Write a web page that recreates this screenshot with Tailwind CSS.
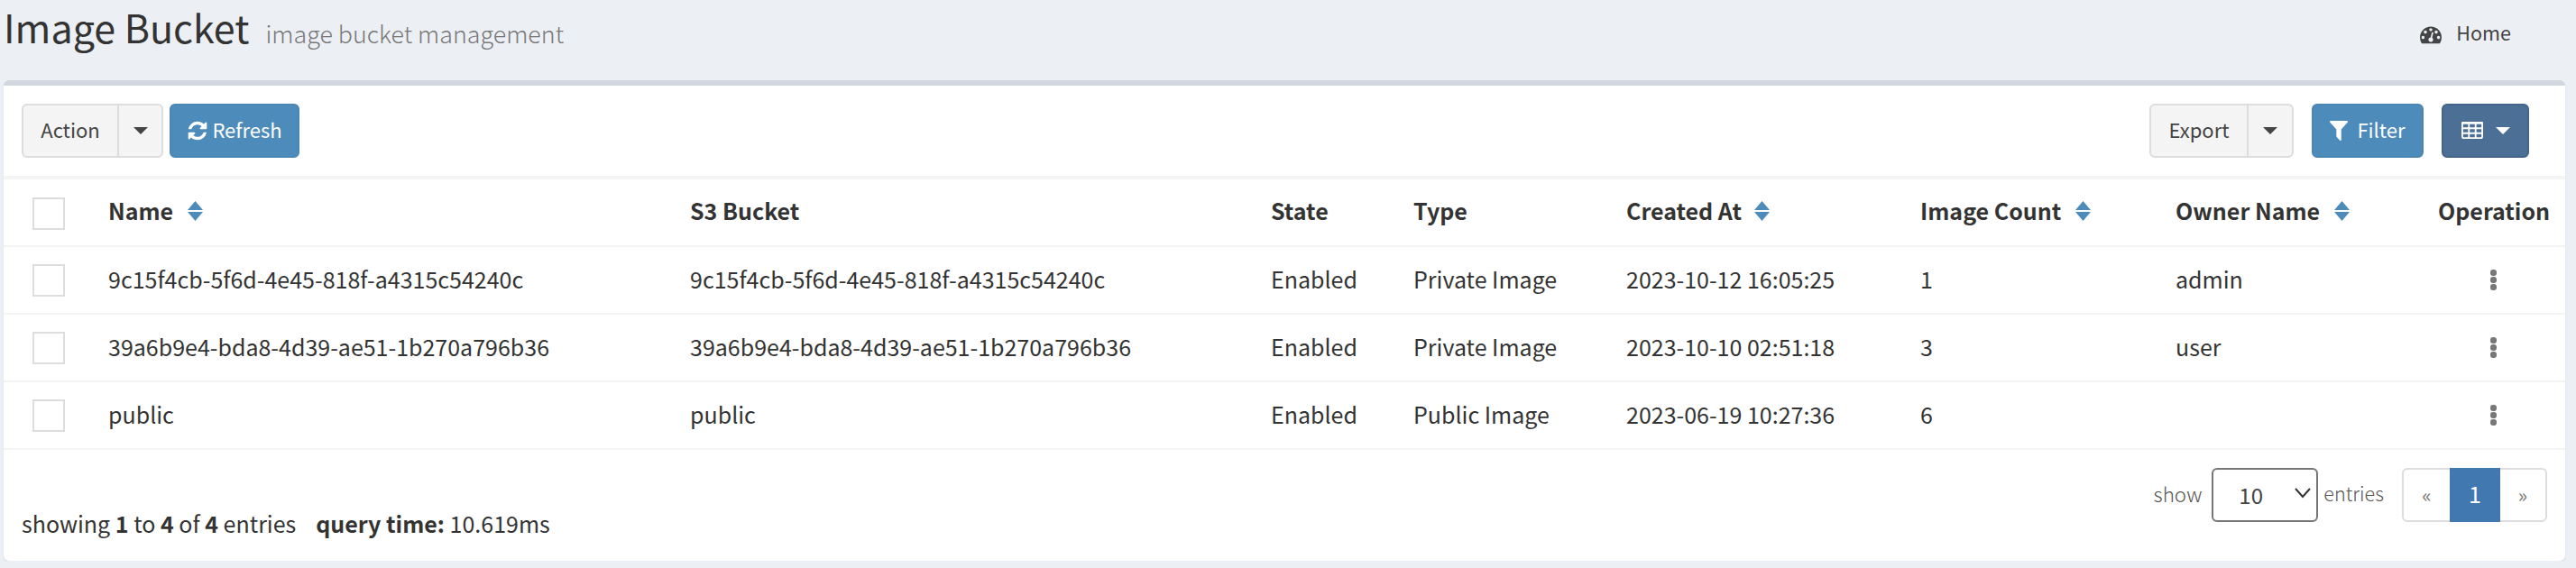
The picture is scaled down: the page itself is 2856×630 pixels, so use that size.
<!DOCTYPE html>
<html lang="en">
<head>
  <meta charset="UTF-8" />
  <meta name="viewport" content="width=device-width, initial-scale=1.0" />
  <title>Image Bucket</title>
  <script src="https://cdn.jsdelivr.net/npm/@tailwindcss/browser@4"></script>
</head>
<body class="bg-[#ecf0f5] font-['Noto_Sans_CJK_SC','Noto_Sans',sans-serif] text-[25px] text-[#333] overflow-hidden">
  <!-- page header -->
  <div class="h-[89px] flex justify-between pl-[4px] pr-[72px]">
    <div class="flex items-baseline h-[58px]">
      <h1 class="text-[43px] leading-[58px] font-normal">Image Bucket</h1>
      <span class="ml-[18px] text-[26.8px] font-light text-[#777]">image bucket management</span>
    </div>
    <div class="flex items-center gap-[16px] h-[75px] text-[21.6px] text-[#444]">
      <svg class="w-[24px] h-[24px]" viewBox="0 0 1792 1792" fill="#444"><path d="M384 1152q0-53-37.5-90.5t-90.5-37.5-90.5 37.5-37.5 90.5 37.5 90.5 90.5 37.5 90.5-37.5 37.5-90.5zm192-448q0-53-37.5-90.5t-90.5-37.5-90.5 37.5-37.5 90.5 37.5 90.5 90.5 37.5 90.5-37.5 37.5-90.5zm428 481l101-382q6-26-7.5-48.5t-38.5-29.5-48 6.5-30 39.5l-101 382q-60 5-107 43.5t-63 98.5q-20 77 20 146t117 89 146-20 89-117q16-60-6-117t-72-91zm660-33q0-53-37.5-90.5t-90.5-37.5-90.5 37.5-37.5 90.5 37.5 90.5 90.5 37.5 90.5-37.5 37.5-90.5zm-640-640q0-53-37.5-90.5t-90.5-37.5-90.5 37.5-37.5 90.5 37.5 90.5 90.5 37.5 90.5-37.5 37.5-90.5zm448 192q0-53-37.5-90.5t-90.5-37.5-90.5 37.5-37.5 90.5 37.5 90.5 90.5 37.5 90.5-37.5 37.5-90.5zm320 448q0 261-141 483-19 29-54 29h-1402q-35 0-54-29-141-221-141-483 0-182 71-348t191-286 286-191 348-71 348 71 286 191 191 286 71 348z"/></svg>
      <span class="pb-[2px]">Home</span>
    </div>
  </div>

  <!-- box -->
  <div class="mx-[4px] w-[2840px] h-[533px] bg-white border-t-[6px] border-[#d2d6de] rounded-[6px] shadow-[0_2px_2px_rgba(0,0,0,0.1)]">
    <!-- toolbar -->
    <div class="h-[104px] border-b-[4px] border-[#f4f4f4] flex justify-between pt-[20px] pl-[20px] pr-[40px] text-[22px]">
      <div class="flex gap-[7px] h-[60px]">
        <div class="flex w-[157px] border-[2px] border-[#ddd] bg-[#f4f4f4] rounded-[6px] text-[#444]">
          <button class="w-[106px] pb-[3px] border-r-[2px] border-[#ddd]">Action</button>
          <button class="flex-1 flex items-center justify-center">
            <svg class="w-[16px] h-[8px]" viewBox="0 0 16 8" fill="#444"><polygon points="0,0 16,0 8,8"/></svg>
          </button>
        </div>
        <button class="w-[144px] flex items-center justify-center gap-[4px] bg-[#4c8bba] border-[2px] border-[#4a86b4] rounded-[6px] text-white">
          <svg class="w-[24px] h-[24px]" viewBox="0 0 1792 1792" fill="#fff"><path d="M1639 1056q0 5-1 7-64 268-268 434.5t-478 166.5q-146 0-282.5-55t-243.5-157l-129 129q-19 19-45 19t-45-19-19-45v-448q0-26 19-45t45-19h448q26 0 45 19t19 45-19 45l-137 137q71 66 161 102t187 36q134 0 250-65t186-179q11-17 53-117 8-23 30-23h192q13 0 22.5 9.5t9.5 22.5zm25-800v448q0 26-19 45t-45 19h-448q-26 0-45-19t-19-45 19-45l138-138q-148-137-349-137-134 0-250 65t-186 179q-11 17-53 117-8 23-30 23h-199q-13 0-22.5-9.5t-9.5-22.5v-7q65-268 270-434.5t480-166.5q146 0 284 55.5t245 156.5l130-129q19-19 45-19t45 19 19 45z"/></svg>
          <span class="pb-[3px]">Refresh</span>
        </button>
      </div>
      <div class="flex h-[60px]">
        <div class="flex w-[160px] border-[2px] border-[#ddd] bg-[#f4f4f4] rounded-[6px] text-[#444]">
          <button class="w-[108px] pb-[3px] border-r-[2px] border-[#ddd]">Export</button>
          <button class="flex-1 flex items-center justify-center">
            <svg class="w-[16px] h-[8px]" viewBox="0 0 16 8" fill="#444"><polygon points="0,0 16,0 8,8"/></svg>
          </button>
        </div>
        <button class="ml-[20px] w-[124px] flex items-center justify-center gap-[10px] bg-[#4c8bba] border-[2px] border-[#4a86b4] rounded-[6px] text-white">
          <svg class="w-[20px] h-[22px]" viewBox="190 256 1410 1408" preserveAspectRatio="none" fill="#fff"><path d="M1595 295q17 41-14 70l-493 493v742q0 42-39 59-13 5-25 5-27 0-45-19l-256-256q-19-19-19-45v-486l-493-493q-31-29-14-70 17-39 59-39h1280q42 0 59 39z"/></svg>
          <span class="pb-[3px]">Filter</span>
        </button>
        <button class="ml-[20px] w-[97px] flex items-center justify-center gap-[14px] bg-[#4b6f95] border-[2px] border-[#44658a] rounded-[6px]">
          <svg class="w-[24px] h-[20px]" viewBox="64 192 1664 1408" preserveAspectRatio="none" fill="#fff"><path d="M576 1376v-192q0-14-9-23t-23-9h-320q-14 0-23 9t-9 23v192q0 14 9 23t23 9h320q14 0 23-9t9-23zm0-384v-192q0-14-9-23t-23-9h-320q-14 0-23 9t-9 23v192q0 14 9 23t23 9h320q14 0 23-9t9-23zm512 384v-192q0-14-9-23t-23-9h-320q-14 0-23 9t-9 23v192q0 14 9 23t23 9h320q14 0 23-9t9-23zm-512-768v-192q0-14-9-23t-23-9h-320q-14 0-23 9t-9 23v192q0 14 9 23t23 9h320q14 0 23-9t9-23zm512 384v-192q0-14-9-23t-23-9h-320q-14 0-23 9t-9 23v192q0 14 9 23t23 9h320q14 0 23-9t9-23zm512 384v-192q0-14-9-23t-23-9h-320q-14 0-23 9t-9 23v192q0 14 9 23t23 9h320q14 0 23-9t9-23zm-512-768v-192q0-14-9-23t-23-9h-320q-14 0-23 9t-9 23v192q0 14 9 23t23 9h320q14 0 23-9t9-23zm512 384v-192q0-14-9-23t-23-9h-320q-14 0-23 9t-9 23v192q0 14 9 23t23 9h320q14 0 23-9t9-23zm0-384v-192q0-14-9-23t-23-9h-320q-14 0-23 9t-9 23v192q0 14 9 23t23 9h320q14 0 23-9t9-23zm128-320v1088q0 66-47 113t-113 47h-1344q-66 0-113-47t-47-113v-1088q0-66 47-113t113-47h1344q66 0 113 47t47 113z"/></svg>
          <svg class="w-[16px] h-[8px]" viewBox="0 0 16 8" fill="#fff"><polygon points="0,0 16,0 8,8"/></svg>
        </button>
      </div>
    </div>

    <!-- table -->
    <table class="w-full table-fixed border-collapse text-left">
      <colgroup>
        <col class="w-[100px]" /><col class="w-[645px]" /><col class="w-[644px]" /><col class="w-[158px]" /><col class="w-[236px]" /><col class="w-[326px]" /><col class="w-[283px]" /><col class="w-[291px]" /><col class="w-[157px]" />
      </colgroup>
      <thead>
        <tr class="h-[74px] border-b-[2px] border-[#f4f4f4]">
          <th class="pl-[32px] pt-[3px] font-normal"><div class="w-[36px] h-[36px] border-[2px] border-[#ddd]"></div></th>
          <th class="px-[16px] pb-[3px] font-bold">
            <div class="flex items-center gap-[16px]">Name
              <svg class="w-[17px] h-[22px]" viewBox="0 0 17 22" fill="#4c8bba"><polygon points="8.5,0 17,10 0,10"/><polygon points="0,12 17,12 8.5,22"/></svg>
            </div>
          </th>
          <th class="px-[16px] pb-[3px] font-bold">S3 Bucket</th>
          <th class="px-[16px] pb-[3px] font-bold">State</th>
          <th class="px-[16px] pb-[3px] font-bold">Type</th>
          <th class="px-[16px] pb-[3px] font-bold">
            <div class="flex items-center gap-[14px]">Created At
              <svg class="w-[17px] h-[22px]" viewBox="0 0 17 22" fill="#4c8bba"><polygon points="8.5,0 17,10 0,10"/><polygon points="0,12 17,12 8.5,22"/></svg>
            </div>
          </th>
          <th class="px-[16px] pb-[3px] font-bold">
            <div class="flex items-center gap-[16px]">Image Count
              <svg class="w-[17px] h-[22px]" viewBox="0 0 17 22" fill="#4c8bba"><polygon points="8.5,0 17,10 0,10"/><polygon points="0,12 17,12 8.5,22"/></svg>
            </div>
          </th>
          <th class="px-[16px] pb-[3px] font-bold">
            <div class="flex items-center gap-[16px]">Owner Name
              <svg class="w-[17px] h-[22px]" viewBox="0 0 17 22" fill="#4c8bba"><polygon points="8.5,0 17,10 0,10"/><polygon points="0,12 17,12 8.5,22"/></svg>
            </div>
          </th>
          <th class="px-[16px] pb-[3px] font-bold whitespace-nowrap">Operation</th>
        </tr>
      </thead>
      <tbody>
        <tr class="h-[75px] border-b-[2px] border-[#f4f4f4]">
          <td class="pl-[32px]"><div class="w-[36px] h-[36px] border-[2px] border-[#ddd]"></div></td>
          <td class="px-[16px] pb-[1px]">9c15f4cb-5f6d-4e45-818f-a4315c54240c</td>
          <td class="px-[16px] pb-[1px]">9c15f4cb-5f6d-4e45-818f-a4315c54240c</td>
          <td class="px-[16px] pb-[1px]">Enabled</td>
          <td class="px-[16px] pb-[1px]">Private Image</td>
          <td class="px-[16px] pb-[1px]">2023-10-12 16:05:25</td>
          <td class="px-[16px] pb-[1px]">1</td>
          <td class="px-[16px] pb-[1px]">admin</td>
          <td class="px-[16px]"><svg class="w-[7px] h-[23px] ml-[58px]" viewBox="0 0 7 23" fill="#777"><rect width="7" height="7" rx="3"/><rect y="8" width="7" height="7" rx="3"/><rect y="16" width="7" height="7" rx="3"/></svg></td>
        </tr>
        <tr class="h-[75px] border-b-[2px] border-[#f4f4f4]">
          <td class="pl-[32px]"><div class="w-[36px] h-[36px] border-[2px] border-[#ddd]"></div></td>
          <td class="px-[16px] pb-[1px]">39a6b9e4-bda8-4d39-ae51-1b270a796b36</td>
          <td class="px-[16px] pb-[1px]">39a6b9e4-bda8-4d39-ae51-1b270a796b36</td>
          <td class="px-[16px] pb-[1px]">Enabled</td>
          <td class="px-[16px] pb-[1px]">Private Image</td>
          <td class="px-[16px] pb-[1px]">2023-10-10 02:51:18</td>
          <td class="px-[16px] pb-[1px]">3</td>
          <td class="px-[16px] pb-[1px]">user</td>
          <td class="px-[16px]"><svg class="w-[7px] h-[23px] ml-[58px]" viewBox="0 0 7 23" fill="#777"><rect width="7" height="7" rx="3"/><rect y="8" width="7" height="7" rx="3"/><rect y="16" width="7" height="7" rx="3"/></svg></td>
        </tr>
        <tr class="h-[75px] border-b-[2px] border-[#f4f4f4]">
          <td class="pl-[32px]"><div class="w-[36px] h-[36px] border-[2px] border-[#ddd]"></div></td>
          <td class="px-[16px] pb-[1px]">public</td>
          <td class="px-[16px] pb-[1px]">public</td>
          <td class="px-[16px] pb-[1px]">Enabled</td>
          <td class="px-[16px] pb-[1px]">Public Image</td>
          <td class="px-[16px] pb-[1px]">2023-06-19 10:27:36</td>
          <td class="px-[16px] pb-[1px]">6</td>
          <td class="px-[16px] pb-[1px]"></td>
          <td class="px-[16px]"><svg class="w-[7px] h-[23px] ml-[58px]" viewBox="0 0 7 23" fill="#777"><rect width="7" height="7" rx="3"/><rect y="8" width="7" height="7" rx="3"/><rect y="16" width="7" height="7" rx="3"/></svg></td>
        </tr>
      </tbody>
    </table>

    <!-- footer -->
    <div class="flex justify-between items-start px-[20px] pt-[20px]">
      <div class="mt-[42px] h-[40px] flex items-center whitespace-pre">
        <span>showing <b>1</b> to <b>4</b> of <b>4</b> entries</span>
        <span class="ml-[22px]"><b>query time:</b> 10.619ms</span>
      </div>
      <div class="flex items-center h-[60px] text-[21.6px] text-[#555]">
        <span class="font-light pb-[3px] text-[22.4px]">show</span>
        <div class="relative ml-[11px] mr-[6px] text-[#444] text-[24px]">
          <select class="appearance-none block w-[118px] h-[60px] pl-[28px] border-[2px] border-[#767676] rounded-[6px] bg-white">
            <option>10</option>
          </select>
          <svg class="absolute right-[8px] top-[22px] w-[18px] h-[12px] pointer-events-none" viewBox="0 0 18 12" fill="none" stroke="#333" stroke-width="2"><polyline points="1,1 9,10 17,1"/></svg>
        </div>
        <span class="font-light pb-[3px]">entries</span>
        <div class="ml-[20px] flex h-[60px] w-[161px] border-[2px] border-[#ddd] rounded-[6px] bg-white">
          <a class="w-[51px] flex items-center justify-center text-[#777]">«</a>
          <a class="w-[56px] -my-[2px] pb-[3px] flex items-center justify-center bg-[#4178b0] text-white text-[25px]">1</a>
          <a class="flex-1 flex items-center justify-center text-[#777]">»</a>
        </div>
      </div>
    </div>
  </div>
</body>
</html>
